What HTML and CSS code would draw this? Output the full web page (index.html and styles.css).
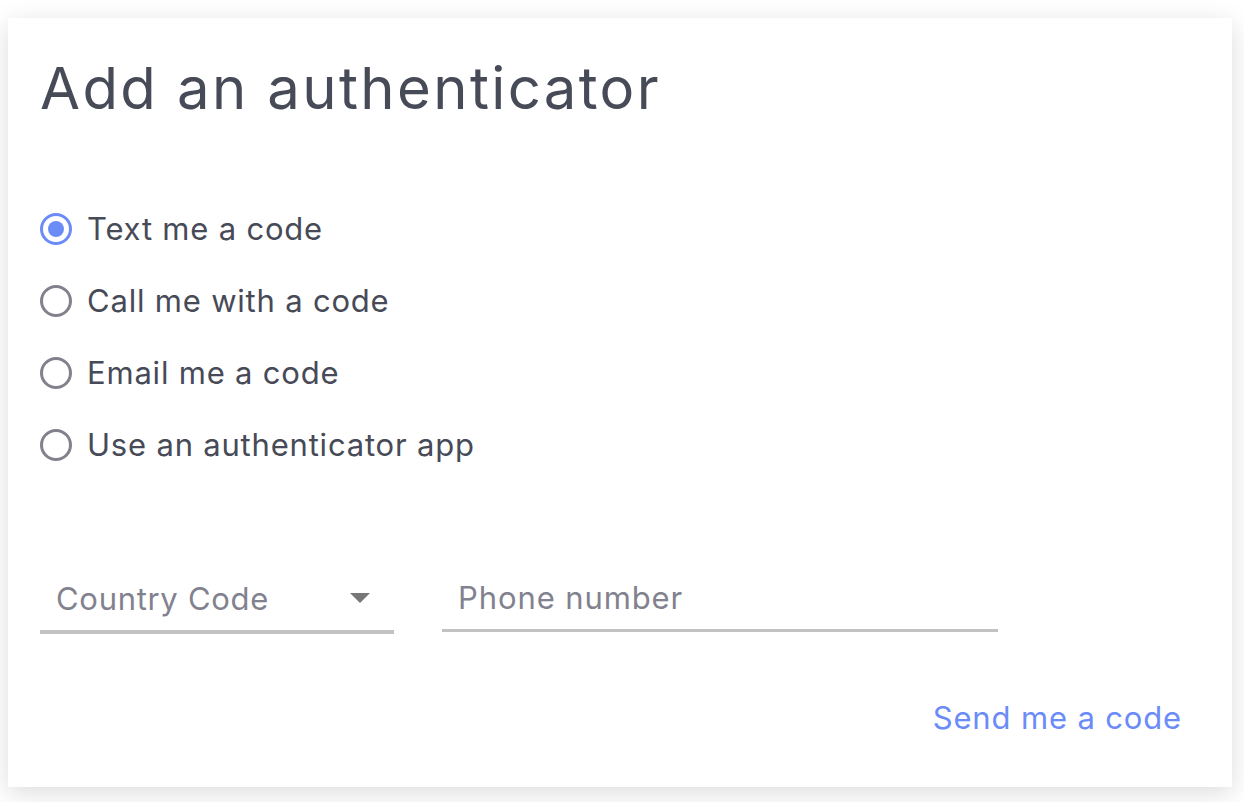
FILE: index.html
```html
<!DOCTYPE html>
<html lang="en">
  <head>
    <meta charset="UTF-8" />
    <meta name="viewport" content="width=device-width, initial-scale=1.0" />
    <title>Add an authenticator</title>
    <link rel="stylesheet" href="styles.css">
  </head>
  <body>
    <div class="auth-card">
      <h1>Add an authenticator</h1>
      <form id="authForm">
        <div class="options">
          <label class="option">
            <input type="radio" name="method" value="sms" checked />
            <span class="radio"></span>
            <span>Text me a code</span>
          </label>
          <label class="option">
            <input type="radio" name="method" value="call" />
            <span class="radio"></span>
            <span>Call me with a code</span>
          </label>
          <label class="option">
            <input type="radio" name="method" value="email" />
            <span class="radio"></span>
            <span>Email me a code</span>
          </label>
          <label class="option">
            <input type="radio" name="method" value="app" />
            <span class="radio"></span>
            <span>Use an authenticator app</span>
          </label>
        </div>
        <div class="fields">
          <div class="field country">
            <span class="placeholder">Country Code</span>
            <span class="caret"></span>
          </div>
          <div class="field phone">
            <input type="tel" id="phone" placeholder="Phone number" />
          </div>
        </div>
        <div class="actions">
          <button type="submit">Send me a code</button>
        </div>
      </form>
    </div>
  </body>
</html>
```

FILE: styles.css
```css
body {
  font-family: Inter, "Noto Sans", sans-serif;
  margin: 0;
  padding: 18px 12px 15px 8px;
  background-color: #fff;
  color: #474a57;
}
.auth-card {
  height: 769px;
  box-sizing: border-box;
  background-color: #fff;
  padding: 42px 32px 0 32px;
  box-shadow: 0 6px 24px rgba(0, 0, 0, 0.14);
}
h1 {
  margin: 0;
  font-size: 58px;
  font-weight: 400;
  line-height: 56px;
  letter-spacing: 2.4px;
}
.options {
  margin-top: 93px;
  display: flex;
  flex-direction: column;
  gap: 32px;
}
.option {
  display: flex;
  align-items: center;
  gap: 15px;
  font-size: 31px;
  line-height: 40px;
  letter-spacing: 0.8px;
  cursor: pointer;
}
.option input {
  display: none;
}
.radio {
  width: 32px;
  height: 32px;
  box-sizing: border-box;
  border: 3px solid #82828f;
  border-radius: 50%;
  position: relative;
}
.option input:checked + .radio {
  border-color: #6b8cf7;
}
.option input:checked + .radio::after {
  content: '';
  position: absolute;
  top: 5px;
  left: 5px;
  width: 16px;
  height: 16px;
  border-radius: 50%;
  background-color: #6b8cf7;
}
.fields {
  margin-top: 110px;
  display: flex;
  gap: 48px;
}
.field {
  height: 59px;
  box-sizing: border-box;
  border-bottom: 4px solid #c2c2c2;
  display: flex;
  align-items: center;
  font-size: 31px;
  letter-spacing: 0.7px;
  color: #82828f;
}
.country {
  width: 354px;
  padding: 0 24px 9px 16px;
  justify-content: space-between;
}
.caret {
  width: 0;
  height: 0;
  border-left: 10px solid transparent;
  border-right: 10px solid transparent;
  border-top: 10px solid #777;
}
.phone {
  width: 556px;
  border-bottom-width: 3px;
  height: 57px;
  padding: 0 16px 9px 16px;
}
.phone input {
  border: none;
  outline: none;
  padding: 0;
  width: 100%;
  font-family: inherit;
  font-size: 31px;
  letter-spacing: 0.9px;
  color: #474a57;
}
.phone input::placeholder {
  color: #82828f;
}
.actions {
  margin-top: 65px;
  display: flex;
  justify-content: flex-end;
  padding-right: 18px;
}
button {
  background: none;
  border: none;
  padding: 0;
  font-family: inherit;
  font-size: 31px;
  letter-spacing: 0.85px;
  color: #6b8cf7;
  cursor: pointer;
}
```
